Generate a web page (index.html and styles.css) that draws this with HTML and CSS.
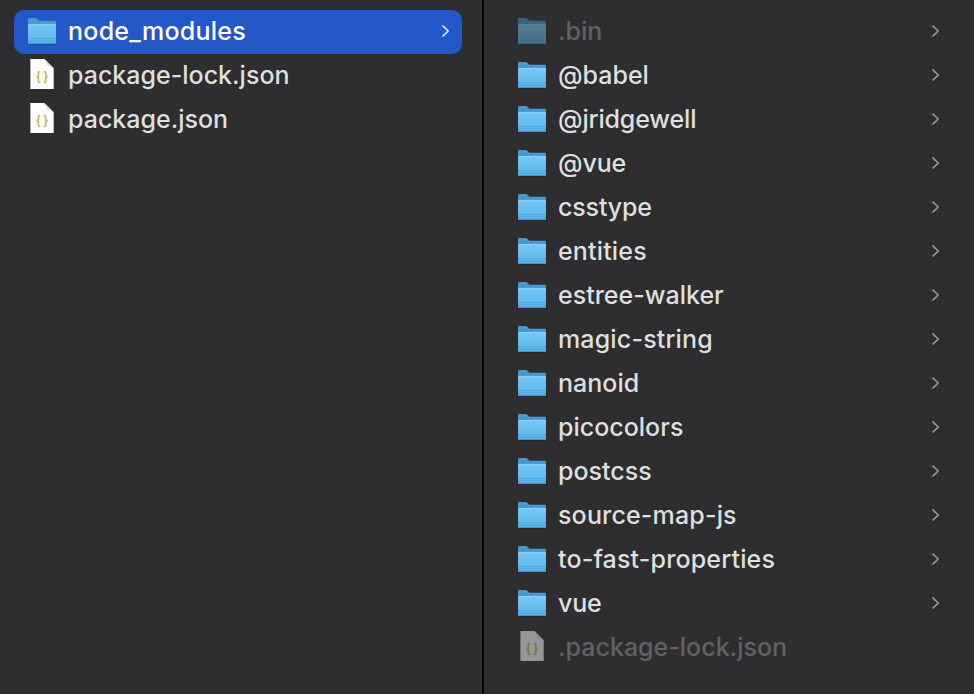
FILE: index.html
```html
<!DOCTYPE html>
<html lang="en">
<head>
<meta charset="utf-8">
<title>node_modules</title>
<link rel="stylesheet" href="styles.css">
</head>
<body>
<svg class="defs" aria-hidden="true">
  <defs>
    <linearGradient id="front" x1="0" y1="0" x2="0" y2="1">
      <stop offset="0" stop-color="#79caf7"/>
      <stop offset="1" stop-color="#55b0e6"/>
    </linearGradient>
    <linearGradient id="fold" x1="0" y1="1" x2="1" y2="0">
      <stop offset="0" stop-color="#ffffff"/>
      <stop offset="0.5" stop-color="#d6d6d6"/>
    </linearGradient>
    <symbol id="folder" viewBox="0 0 32 32">
      <path d="M2 28h28v1.8H2z" fill="#000" opacity=".2"/>
      <path d="M2 4.2Q2 3 3.2 3H9.4Q10.3 3 11 3.6L12.8 5.2Q13.4 5.8 14.4 5.8H28.8Q30 5.8 30 7V27.8Q30 29 28.8 29H3.2Q2 29 2 27.8Z" fill="#4799cf"/>
      <path d="M2 10Q2 8.9 3.1 8.9H28.9Q30 8.9 30 10V27.8Q30 29 28.8 29H3.2Q2 29 2 27.8Z" fill="url(#front)"/>
      <path d="M2.5 9.4h27" stroke="#8ed3f9" stroke-width=".8"/>
      <path d="M2 23.5h28M2 26h28" stroke="#4ea6da" stroke-width=".7"/>
      <path d="M2.6 28.5h26.8" stroke="#3d93c8" stroke-width=".9"/>
    </symbol>
    <symbol id="file" viewBox="0 0 32 32">
      <path d="M4.4 0H18.4L27.7 9.3V30H4.4Z" fill="#fff"/>
      <path d="M18.4 0L27.7 9.3Q25 7 21.6 7.4Q20.8 3 18.4 0Z" fill="url(#fold)"/>
      <path d="M14.3 12.6H13.8Q12.4 12.6 12.4 14V16.2Q12.4 17.9 10.4 17.9Q12.4 17.9 12.4 19.6V22Q12.4 23.4 13.8 23.4H14.3M17.8 12.6H18.3Q19.7 12.6 19.7 14V16.2Q19.7 17.9 21.7 17.9Q19.7 17.9 19.7 19.6V22Q19.7 23.4 18.3 23.4H17.8" fill="none" stroke="#c0be58" stroke-width="1.7"/>
    </symbol>
    <symbol id="chevron" viewBox="0 0 8 14">
      <path d="M1 2L6.2 7L1 12" fill="none" stroke="currentColor" stroke-width="1.7" stroke-linecap="round" stroke-linejoin="round"/>
    </symbol>
  </defs>
</svg>
<main class="browser">
  <ul class="column">
    <li class="row selected"><svg class="icon"><use href="#folder"/></svg><span class="name">node_modules</span><svg class="chevron"><use href="#chevron"/></svg></li>
    <li class="row"><svg class="icon"><use href="#file"/></svg><span class="name">package-lock.json</span></li>
    <li class="row"><svg class="icon"><use href="#file"/></svg><span class="name">package.json</span></li>
  </ul>
  <ul class="column">
    <li class="row hidden-item"><svg class="icon"><use href="#folder"/></svg><span class="name">.bin</span><svg class="chevron"><use href="#chevron"/></svg></li>
    <li class="row"><svg class="icon"><use href="#folder"/></svg><span class="name">@babel</span><svg class="chevron"><use href="#chevron"/></svg></li>
    <li class="row"><svg class="icon"><use href="#folder"/></svg><span class="name tight">@jridgewell</span><svg class="chevron"><use href="#chevron"/></svg></li>
    <li class="row"><svg class="icon"><use href="#folder"/></svg><span class="name tight">@vue</span><svg class="chevron"><use href="#chevron"/></svg></li>
    <li class="row"><svg class="icon"><use href="#folder"/></svg><span class="name tight">csstype</span><svg class="chevron"><use href="#chevron"/></svg></li>
    <li class="row"><svg class="icon"><use href="#folder"/></svg><span class="name loose">entities</span><svg class="chevron"><use href="#chevron"/></svg></li>
    <li class="row"><svg class="icon"><use href="#folder"/></svg><span class="name">estree-walker</span><svg class="chevron"><use href="#chevron"/></svg></li>
    <li class="row"><svg class="icon"><use href="#folder"/></svg><span class="name loose">magic-string</span><svg class="chevron"><use href="#chevron"/></svg></li>
    <li class="row"><svg class="icon"><use href="#folder"/></svg><span class="name">nanoid</span><svg class="chevron"><use href="#chevron"/></svg></li>
    <li class="row"><svg class="icon"><use href="#folder"/></svg><span class="name">picocolors</span><svg class="chevron"><use href="#chevron"/></svg></li>
    <li class="row"><svg class="icon"><use href="#folder"/></svg><span class="name">postcss</span><svg class="chevron"><use href="#chevron"/></svg></li>
    <li class="row"><svg class="icon"><use href="#folder"/></svg><span class="name loose">source-map-js</span><svg class="chevron"><use href="#chevron"/></svg></li>
    <li class="row"><svg class="icon"><use href="#folder"/></svg><span class="name loose">to-fast-properties</span><svg class="chevron"><use href="#chevron"/></svg></li>
    <li class="row"><svg class="icon"><use href="#folder"/></svg><span class="name tight">vue</span><svg class="chevron"><use href="#chevron"/></svg></li>
    <li class="row hidden-item"><svg class="icon"><use href="#file"/></svg><span class="name">.package-lock.json</span></li>
  </ul>
</main>
</body>
</html>
```
FILE: styles.css
```css
* {
  box-sizing: border-box;
}

body {
  margin: 0;
  background: #2e2e30;
  color: #dfdfdf;
  font: 500 25px/42px Inter, "Liberation Sans", sans-serif;
  overflow: hidden;
}

.defs {
  display: block;
  width: 0;
  height: 0;
}

.browser {
  display: grid;
  grid-template-columns: 484px 1fr;
  height: 694px;
}

.column {
  margin: 0;
  padding: 10px 20px 0 14px;
  list-style: none;
}

.column:first-child {
  border-right: 2px solid #000;
}

.column:last-child {
  padding-left: 20px;
}

.row {
  display: flex;
  align-items: center;
  height: 44px;
  padding: 0 12px;
  border-radius: 10px;
}

.column:last-child .row {
  padding-right: 14px;
}

.icon {
  flex: none;
  width: 32px;
  height: 32px;
  margin: -2px 10px 0 0;
}

.name {
  flex: 1;
  height: 44px;
  white-space: nowrap;
}

.loose {
  letter-spacing: 0.16px;
}

.tight {
  letter-spacing: -0.15px;
}

.chevron {
  width: 8px;
  height: 14px;
  margin-top: -2px;
  color: #98989a;
}

.selected {
  background: #2458c9;
  color: #fff;
}

.selected .name {
  letter-spacing: 0.25px;
}

.selected .chevron {
  color: #e6ecf9;
}

.hidden-item .name {
  color: #616162;
}

.hidden-item .icon {
  opacity: 0.5;
}
```
